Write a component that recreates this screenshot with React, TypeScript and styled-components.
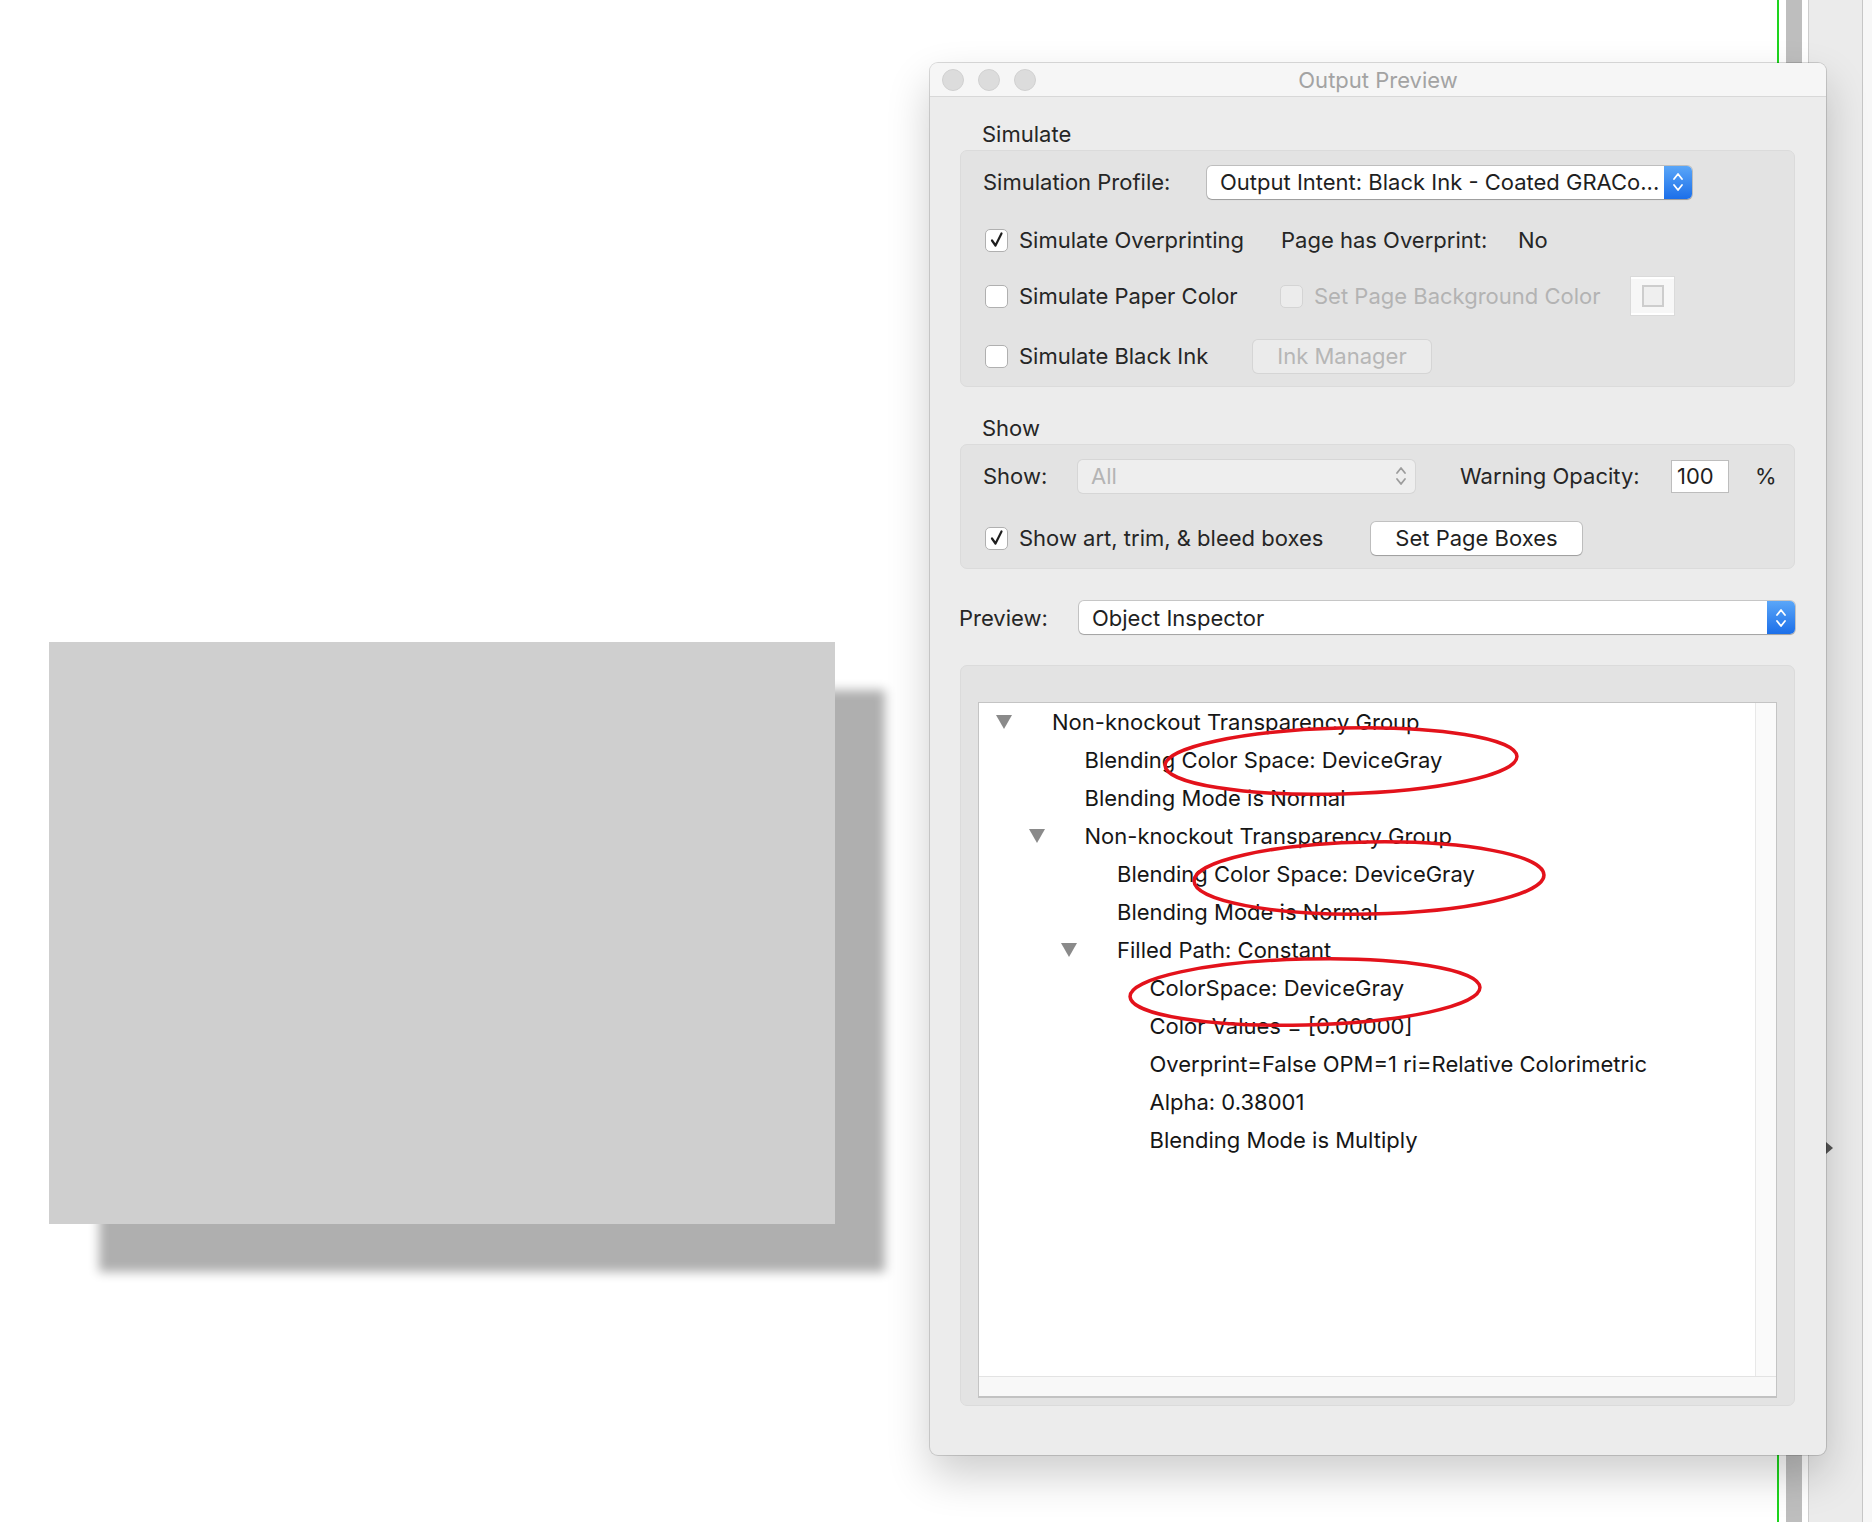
import React from 'react';
import styled, { createGlobalStyle } from 'styled-components';

const GlobalStyle = createGlobalStyle`
  html, body {
    margin: 0;
    padding: 0;
    background: #ffffff;
  }
  body {
    font-family: Inter, "Liberation Sans", Arial, sans-serif;
    color: #222222;
  }
`;

type TreeNode = {
  depth: number;
  text: string;
  expanded?: boolean;
};

const treeRows: TreeNode[] = [
  { depth: 0, text: 'Non-knockout Transparency Group', expanded: true },
  { depth: 1, text: 'Blending Color Space: DeviceGray' },
  { depth: 1, text: 'Blending Mode is Normal' },
  { depth: 1, text: 'Non-knockout Transparency Group', expanded: true },
  { depth: 2, text: 'Blending Color Space: DeviceGray' },
  { depth: 2, text: 'Blending Mode is Normal' },
  { depth: 2, text: 'Filled Path: Constant', expanded: true },
  { depth: 3, text: 'ColorSpace: DeviceGray' },
  { depth: 3, text: 'Color Values = [0.00000]' },
  { depth: 3, text: 'Overprint=False OPM=1 ri=Relative Colorimetric' },
  { depth: 3, text: 'Alpha: 0.38001' },
  { depth: 3, text: 'Blending Mode is Multiply' },
];

// red hand-drawn marks over the inspector text
const marks = [
  { cx: 362, cy: 58, rx: 176, ry: 33, rot: -1.5 },
  { cx: 390, cy: 175, rx: 175, ry: 36, rot: -1 },
  { cx: 326, cy: 289, rx: 175, ry: 33, rot: -1.5 },
];

const Chevrons: React.FC<{ color: string }> = ({ color }) => (
  <svg width="12" height="22" viewBox="0 0 12 22">
    <path
      d="M2 8 L6 3 L10 8"
      fill="none"
      stroke={color}
      strokeWidth="1.8"
      strokeLinecap="round"
      strokeLinejoin="round"
    />
    <path
      d="M2 14 L6 19 L10 14"
      fill="none"
      stroke={color}
      strokeWidth="1.8"
      strokeLinecap="round"
      strokeLinejoin="round"
    />
  </svg>
);

const CheckBox: React.FC<{ checked?: boolean; disabled?: boolean }> = ({
  checked,
  disabled,
}) => (
  <Box $disabled={disabled}>
    {checked && (
      <svg width="18" height="18" viewBox="0 0 18 18">
        <path
          d="M4 9.5 L7.5 14.5 L13.5 2.5"
          fill="none"
          stroke="#1e1e1e"
          strokeWidth="2.2"
          strokeLinecap="round"
          strokeLinejoin="round"
        />
      </svg>
    )}
  </Box>
);

const DisclosureTriangle = () => (
  <svg width="16" height="14" viewBox="0 0 16 14">
    <polygon points="0,0 16,0 8,14" fill="#8a8a8a" />
  </svg>
);

export default function App() {
  return (
    <Screen>
      <GlobalStyle />
      <Canvas>
        <Page />
      </Canvas>
      <GuideLine />
      <Gutter $width={7} />
      <ScrollThumb />
      <Gutter $width={6} />
      <SidePanel>
        <CollapseArrow />
      </SidePanel>
      <FarEdge />

      <Window>
        <TitleBar>
          <Lights>
            <Light />
            <Light />
            <Light />
          </Lights>
          <Title>Output Preview</Title>
        </TitleBar>

        <Body>
          <SectionLabel>Simulate</SectionLabel>
          <Group>
            <Row>
              <FieldLabel $width={224}>Simulation Profile:</FieldLabel>
              <Popup $width={485}>
                <PopupText>Output Intent: Black Ink - Coated GRACo...</PopupText>
                <Stepper>
                  <Chevrons color="#ffffff" />
                </Stepper>
              </Popup>
            </Row>
            <Row>
              <CheckItem $width={298}>
                <CheckBox checked />
                <CheckText>Simulate Overprinting</CheckText>
              </CheckItem>
              <FieldLabel $width={237}>Page has Overprint:</FieldLabel>
              <FieldLabel>No</FieldLabel>
            </Row>
            <Row $lift={2}>
              <CheckItem $width={295}>
                <CheckBox />
                <CheckText>Simulate Paper Color</CheckText>
              </CheckItem>
              <CheckItem $width={353}>
                <CheckBox disabled />
                <CheckText $disabled>Set Page Background Color</CheckText>
              </CheckItem>
              <ColorWell>
                <Swatch />
              </ColorWell>
            </Row>
            <Row>
              <CheckItem $width={270}>
                <CheckBox />
                <CheckText>Simulate Black Ink</CheckText>
              </CheckItem>
              <Button $width={178} disabled>
                Ink Manager
              </Button>
            </Row>
          </Group>

          <SectionLabel $spaced>Show</SectionLabel>
          <Group $gap={22}>
            <Row>
              <FieldLabel $width={95}>Show:</FieldLabel>
              <Popup $width={337} $disabled>
                <PopupText $disabled>All</PopupText>
                <PlainStepper>
                  <Chevrons color="#9c9c9c" />
                </PlainStepper>
              </Popup>
              <FieldLabel $width={211} style={{ marginLeft: 45 }}>
                Warning Opacity:
              </FieldLabel>
              <NumberField>100</NumberField>
              <Percent>%</Percent>
            </Row>
            <Row>
              <CheckItem $width={388}>
                <CheckBox checked />
                <CheckText>Show art, trim, &amp; bleed boxes</CheckText>
              </CheckItem>
              <Button $width={211}>Set Page Boxes</Button>
            </Row>
          </Group>

          <PreviewRow>
            <FieldLabel $width={120}>Preview:</FieldLabel>
            <Popup $grow>
              <PopupText>Object Inspector</PopupText>
              <Stepper>
                <Chevrons color="#ffffff" />
              </Stepper>
            </Popup>
          </PreviewRow>

          <InspectorGroup>
            <Outline>
              <OutlineMain>
                <Tree>
                  {treeRows.map((row, i) => (
                    <TreeRow key={i} $depth={row.depth}>
                      <TriangleSlot>
                        {row.expanded && <DisclosureTriangle />}
                      </TriangleSlot>
                      <TreeText>{row.text}</TreeText>
                    </TreeRow>
                  ))}
                  <Marks width="776" height="676" viewBox="0 0 776 676">
                    {marks.map((m, i) => (
                      <ellipse
                        key={i}
                        cx={m.cx}
                        cy={m.cy}
                        rx={m.rx}
                        ry={m.ry}
                        fill="none"
                        stroke="#e3121b"
                        strokeWidth="3.5"
                        transform={`rotate(${m.rot} ${m.cx} ${m.cy})`}
                      />
                    ))}
                  </Marks>
                </Tree>
                <VTrack />
              </OutlineMain>
              <HTrack />
            </Outline>
          </InspectorGroup>
        </Body>
      </Window>
    </Screen>
  );
}

const Screen = styled.div`
  position: relative;
  width: 1872px;
  height: 1522px;
  display: flex;
  overflow: hidden;
  background: #ffffff;
`;

const Canvas = styled.div`
  width: 1777px;
  flex-shrink: 0;
  padding: 642px 0 0 49px;
  box-sizing: border-box;
`;

const Page = styled.div`
  width: 786px;
  height: 582px;
  background: #cfcfcf;
  box-shadow: 50px 48px 10px #afafaf;
`;

const GuideLine = styled.div`
  width: 2px;
  flex-shrink: 0;
  background: #1ed41e;
`;

const Gutter = styled.div<{ $width: number }>`
  width: ${(p) => p.$width}px;
  flex-shrink: 0;
  background: #ffffff;
`;

const ScrollThumb = styled.div`
  width: 16px;
  flex-shrink: 0;
  background: #bebebe;
`;

const SidePanel = styled.div`
  width: 36px;
  flex-shrink: 0;
  background: #ebebeb;
  border-left: 1px solid #cdcdcd;
  border-right: 1px solid #c6c6c6;
  padding: 1142px 0 0 17px;
  box-sizing: content-box;
`;

const CollapseArrow = styled.div`
  width: 0;
  height: 0;
  border-top: 6px solid transparent;
  border-bottom: 6px solid transparent;
  border-left: 7px solid #555555;
`;

const FarEdge = styled.div`
  flex: 1;
  background: #f7f7f7;
`;

const Window = styled.div`
  position: absolute;
  left: 930px;
  top: 63px;
  width: 896px;
  height: 1392px;
  background: #ececec;
  border-radius: 8px;
  box-shadow: 0 0 0 1px rgba(0, 0, 0, 0.14), 0 20px 44px rgba(0, 0, 0, 0.2);
  overflow: hidden;
  display: flex;
  flex-direction: column;
`;

const TitleBar = styled.div`
  position: relative;
  height: 33px;
  flex-shrink: 0;
  background: #f6f6f6;
  border-bottom: 1px solid #d8d8d8;
  display: flex;
  align-items: center;
  justify-content: center;
`;

const Lights = styled.div`
  position: absolute;
  left: 12px;
  top: 6px;
  display: flex;
  gap: 14px;
`;

const Light = styled.div`
  width: 22px;
  height: 22px;
  border-radius: 50%;
  background: #dcdcdc;
  border: 1px solid #d0d0d0;
  box-sizing: border-box;
`;

const Title = styled.div`
  font-size: 22px;
  color: #a3a3a3;
`;

const Body = styled.div`
  padding: 24px 31px 0 30px;
  display: flex;
  flex-direction: column;
`;

const SectionLabel = styled.div<{ $spaced?: boolean }>`
  height: 26px;
  line-height: 26px;
  font-size: 22px;
  margin: ${(p) => (p.$spaced ? '28px' : '0')} 0 3px 22px;
  color: #262626;
`;

const Group = styled.div<{ $gap?: number }>`
  background: #e3e3e3;
  border: 1px solid #dbdbdb;
  border-radius: 7px;
  padding: 11px 22px 10px;
  display: flex;
  flex-direction: column;
  gap: ${(p) => p.$gap ?? 18}px;
`;

const Row = styled.div<{ $lift?: number }>`
  height: 40px;
  display: flex;
  align-items: center;
  margin-top: ${(p) => (p.$lift ? -p.$lift : 0)}px;
  margin-bottom: ${(p) => p.$lift ?? 0}px;
`;

const FieldLabel = styled.div<{ $width?: number }>`
  width: ${(p) => (p.$width ? `${p.$width}px` : 'auto')};
  flex-shrink: 0;
  font-size: 22px;
  color: #262626;
  white-space: nowrap;
`;

const Popup = styled.div<{ $width?: number; $grow?: boolean; $disabled?: boolean }>`
  width: ${(p) => (p.$width ? `${p.$width}px` : 'auto')};
  flex: ${(p) => (p.$grow ? 1 : '0 0 auto')};
  height: 33px;
  box-sizing: border-box;
  display: flex;
  align-items: stretch;
  border-radius: 5px;
  background: ${(p) => (p.$disabled ? '#eeeeee' : '#ffffff')};
  box-shadow: ${(p) =>
    p.$disabled
      ? '0 0 0 1px #d6d6d6'
      : '0 0 0 1px rgba(0,0,0,0.16), 0 1px 1px rgba(0,0,0,0.18)'};
  overflow: hidden;
`;

const PopupText = styled.div<{ $disabled?: boolean }>`
  flex: 1;
  padding-left: 13px;
  display: flex;
  align-items: center;
  font-size: 22px;
  color: ${(p) => (p.$disabled ? '#b4b4b4' : '#1f1f1f')};
  white-space: nowrap;
  overflow: hidden;
`;

const Stepper = styled.div`
  width: 28px;
  flex-shrink: 0;
  display: flex;
  align-items: center;
  justify-content: center;
  background: linear-gradient(#5aa6f8, #1c6fe9);
`;

const PlainStepper = styled.div`
  width: 28px;
  flex-shrink: 0;
  display: flex;
  align-items: center;
  justify-content: center;
`;

const CheckItem = styled.div<{ $width: number }>`
  width: ${(p) => p.$width}px;
  flex-shrink: 0;
  display: flex;
  align-items: center;
  padding-left: 2px;
  box-sizing: border-box;
`;

const Box = styled.div<{ $disabled?: boolean }>`
  width: 23px;
  height: 23px;
  box-sizing: border-box;
  border-radius: 5px;
  background: ${(p) => (p.$disabled ? '#ececec' : '#ffffff')};
  border: 1px solid ${(p) => (p.$disabled ? '#d4d4d4' : '#b0b0b0')};
  display: flex;
  align-items: center;
  justify-content: center;
  flex-shrink: 0;
`;

const CheckText = styled.span<{ $disabled?: boolean }>`
  margin-left: 11px;
  font-size: 22px;
  white-space: nowrap;
  color: ${(p) => (p.$disabled ? '#b3b3b3' : '#262626')};
`;

const ColorWell = styled.div`
  width: 43px;
  height: 38px;
  box-sizing: border-box;
  background: #f7f7f7;
  border-top: 2px solid #ffffff;
  border-bottom: 2px solid #ffffff;
  box-shadow: 0 0 0 1px #dadada;
  display: flex;
  align-items: center;
  justify-content: center;
`;

const Swatch = styled.div`
  width: 22px;
  height: 22px;
  box-sizing: border-box;
  border: 2px solid #cdcdcd;
  background: #efefef;
`;

const Button = styled.button<{ $width: number }>`
  width: ${(p) => p.$width}px;
  height: 33px;
  flex-shrink: 0;
  border: none;
  border-radius: 5px;
  font-family: inherit;
  font-size: 22px;
  background: #ffffff;
  color: #1f1f1f;
  box-shadow: 0 0 0 1px rgba(0, 0, 0, 0.15), 0 1px 1px rgba(0, 0, 0, 0.18);
  padding: 0;

  &:disabled {
    background: #ebebeb;
    color: #b6b6b6;
    box-shadow: 0 0 0 1px #d5d5d5;
  }
`;

const NumberField = styled.div`
  width: 58px;
  height: 33px;
  box-sizing: border-box;
  background: #ffffff;
  border: 1px solid #bdbdbd;
  display: flex;
  align-items: center;
  padding-left: 5px;
  font-size: 22px;
  color: #1f1f1f;
  flex-shrink: 0;
`;

const Percent = styled.div`
  margin-left: 26px;
  font-size: 22px;
  color: #262626;
`;

const PreviewRow = styled.div`
  margin-top: 32px;
  height: 33px;
  display: flex;
  align-items: center;
  margin-left: -1px;
`;

const InspectorGroup = styled.div`
  margin-top: 31px;
  height: 741px;
  box-sizing: border-box;
  background: #e3e3e3;
  border: 1px solid #dbdbdb;
  border-radius: 7px;
  padding: 36px 17px 7px 17px;
  display: flex;
`;

const Outline = styled.div`
  flex: 1;
  display: flex;
  flex-direction: column;
  background: #ffffff;
  border: 1px solid #c4c4c4;
  border-bottom: 2px solid #c2c2c2;
`;

const OutlineMain = styled.div`
  flex: 1;
  display: flex;
`;

const Tree = styled.div`
  position: relative;
  flex: 1;
  display: flex;
  flex-direction: column;
`;

const TreeRow = styled.div<{ $depth: number }>`
  height: 38px;
  display: flex;
  align-items: center;
  padding-left: ${(p) => 17 + p.$depth * 32.5}px;
`;

const TriangleSlot = styled.div`
  width: 16px;
  height: 14px;
  margin-right: 40px;
  display: flex;
  flex-shrink: 0;
`;

const TreeText = styled.span`
  font-size: 22px;
  color: #161616;
  white-space: nowrap;
`;

const Marks = styled.svg`
  position: absolute;
  left: 0;
  top: 0;
  pointer-events: none;
`;

const VTrack = styled.div`
  width: 20px;
  flex-shrink: 0;
  background: #fafafa;
  border-left: 1px solid #e8e8e8;
`;

const HTrack = styled.div`
  height: 19px;
  flex-shrink: 0;
  background: #f8f8f8;
  border-top: 1px solid #e3e3e3;
`;
